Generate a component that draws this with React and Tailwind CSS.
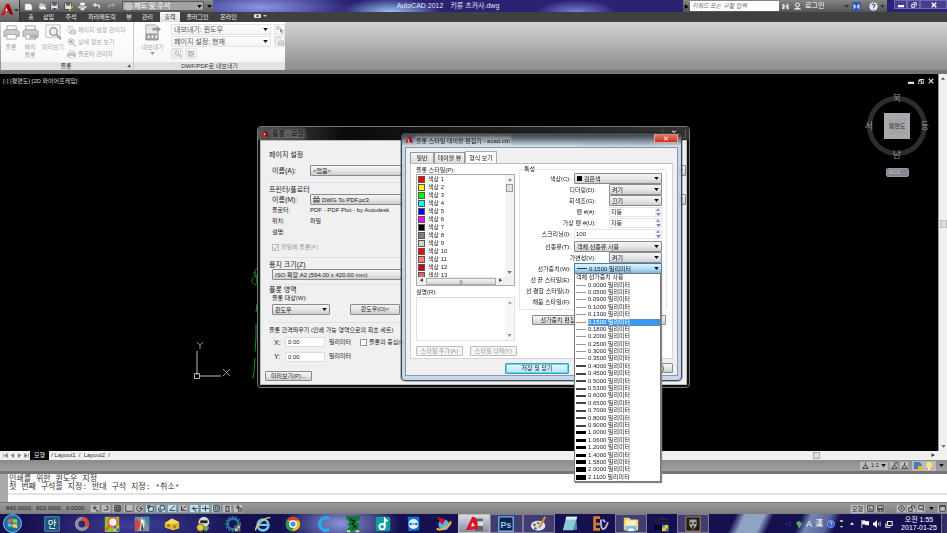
import React from "react";

const raised = "border border-[#8a8a8a] rounded-[1px] bg-linear-to-b from-[#f6f6f6] via-[#e6e6e6] to-[#cfcfcf]";

function Arrow({ className = "text-black" }) {
  return (
    <svg viewBox="0 0 6 4" className={`w-[5px] h-[3px] shrink-0 ${className}`} aria-hidden="true">
      <path d="M0 0h6L3 4z" fill="currentColor" />
    </svg>
  );
}

function ArrowUp({ className = "text-[#777]" }) {
  return (
    <svg viewBox="0 0 6 4" className={`w-[4px] h-[3px] shrink-0 ${className}`} aria-hidden="true">
      <path d="M0 4h6L3 0z" fill="currentColor" />
    </svg>
  );
}

function Select({ id, label, value, className = "", tone = raised, children }) {
  return (
    <div className={`flex items-center h-[11px] min-w-0 px-[2px] gap-[2px] ${tone} ${className}`}>
      {children}
      <select id={id} aria-label={label} defaultValue={value} className="appearance-none bg-transparent outline-none flex-1 min-w-0 h-[8px] leading-[8px] p-0">
        <option>{value}</option>
      </select>
      <Arrow />
    </div>
  );
}

function Logo({ className }) {
  return (
    <svg viewBox="0 0 18 18" className={className} aria-hidden="true">
      <path d="M1 16 8 1l4 1 5 13-5-1-1-3-4 1-2 4z" fill="#d8141c" />
      <path d="M8 1l4 1 5 13-5-1z" fill="#8d0a10" />
      <path d="m8 6 2 4-3 1z" fill="#fff" />
    </svg>
  );
}

/* ---------- application header ---------- */

const g = { fill: "none", stroke: "currentColor", strokeWidth: 1.2 };

function QuickIcon({ kind }) {
  return (
    <svg viewBox="0 0 12 12" className="w-[9px] h-[9px] text-[#eee]" aria-hidden="true">
      {kind === "new" && <path d="M1 2h7l3 3v6H1z" fill="#f4f4f4" stroke="#555" strokeWidth=".5" />}
      {kind === "open" && <><path d="M2 2h4l1 1h3v7H2z" fill="#cfd8e4" /><path d="M0 5h9l3 5H3z" fill="#f2f2f2" stroke="#444" strokeWidth=".5" /></>}
      {kind === "save" && <><path d="M1 1h10v10H1z" fill="#dfe6ee" stroke="#333" /><path d="M3 1h6v4H3zM3 8h6v3H3z" fill="#55606e" /></>}
      {kind === "saveas" && <><path d="M1 1h9v9H1z" fill="#dfe6ee" stroke="#333" /><path d="M3 1h5v4H3z" fill="#55606e" /><path d="m6 11 5-6 1 2-4 5z" fill="#e9b93b" /></>}
      {kind === "print" && <><path d="M3 1h6v4H3z" fill="#fff" /><path d="M0 5h12v4H0z" fill="#d4d4d4" stroke="#333" strokeWidth=".6" /><path d="M3 8h6v3H3z" fill="#fff" stroke="#444" strokeWidth=".5" /></>}
      {kind === "undo" && <path d="M5 1 1 4l4 3V5c4 0 5 1 4 5 4-5 1-7-4-7z" fill="#dbe6f2" />}
      {kind === "redo" && <path d="m7 1 4 3-4 3V5C3 5 2 6 3 10-1 5 2 3 7 3z" fill="#a3a3a3" />}
      {kind === "gear" && <><circle cx="6" cy="6" r="4.6" {...g} strokeDasharray="1.6 .8" /><circle cx="6" cy="6" r="3.6" {...g} strokeWidth=".8" /><circle cx="6" cy="6" r="1.4" {...g} /></>}
    </svg>
  );
}

function TitleRow() {
  return (
    <div className="flex h-[12px] text-[6px] leading-[8px] bg-[#2a2374] bg-[radial-gradient(ellipse_90px_18px_at_26%_60%,#8d96e6,transparent),radial-gradient(ellipse_50px_14px_at_40%_100%,#9bc4f2,transparent),radial-gradient(ellipse_40px_12px_at_60%_100%,#7b7fd6,transparent)]">
      <div className="flex items-center w-[193px] bg-linear-to-b from-[#8d8d8d] to-[#5c5c5c] pl-[4px] gap-[6px]">
        <button aria-label="새로 만들기"><QuickIcon kind="new" /></button>
        <button aria-label="열기" className="-ml-px"><QuickIcon kind="open" /></button>
        <button aria-label="저장" className="ml-[-3px]"><QuickIcon kind="save" /></button>
        <button aria-label="다른 이름으로 저장" className="-ml-px"><QuickIcon kind="saveas" /></button>
        <button aria-label="플롯" className="-ml-px"><QuickIcon kind="print" /></button>
        <button aria-label="명령 취소" className="-ml-px"><QuickIcon kind="undo" /></button>
        <button aria-label="명령 복구"><QuickIcon kind="redo" /></button>
        <div className="flex items-center h-[10px] flex-1 border border-[#5a5a5a] bg-[#a3a3a3] text-white px-px gap-px">
          <QuickIcon kind="gear" />
          <select aria-label="작업공간" defaultValue="제도 및 주석" className="appearance-none bg-transparent flex-1 min-w-0 text-[7px] leading-[8px]">
            <option>제도 및 주석</option>
          </select>
          <Arrow />
        </div>
        <span className="-ml-[3px] pr-px"><Arrow /></span>
      </div>
      <div className="flex flex-1 justify-center items-center text-[#e4e4f4] text-[7px] gap-[7px]">
        <span>AutoCAD 2012</span><span>키류 츠카사.dwg</span>
      </div>
      <div className="flex items-center w-[204px] bg-linear-to-b from-[#858585] to-[#555] text-white">
        <span className="w-[7px] text-black text-[5px] text-center">▶</span>
        <input aria-label="검색" placeholder="키워드 또는 구절 입력" className="w-[89px] h-[10px] bg-white px-[2px] italic placeholder:text-[#666] text-[6px]" />
        <svg viewBox="0 0 12 12" className="w-[9px] h-[9px] ml-[2px]" aria-hidden="true"><path d="M2 2h3v3h2V2h3l1 8H7V7H5v3H1z" fill="#e2e2e2" stroke="#333" strokeWidth=".4" /></svg>
        <svg viewBox="0 0 12 12" className="w-[9px] h-[9px] ml-[3px]" aria-hidden="true"><circle cx="6" cy="4" r="2.6" {...g} /><path d="M1 10c1-3 9-3 10 0z" fill="#eee" /></svg>
        <button className="ml-[3px] text-[7px]">로그인</button>
        <span className="flex-1" />
        <Arrow className="text-[#333]" />
        <svg viewBox="0 0 12 12" className="w-[9px] h-[9px] ml-[3px]" aria-hidden="true"><path d="M0 0h12v12H0z" fill="#2e56a8" /><path d="M2 2l4 4-4 4zm8 0L6 6l4 4z" fill="#bcd3f5" /></svg>
        <svg viewBox="0 0 12 12" className="w-[9px] h-[9px] ml-[8px]" aria-hidden="true"><circle cx="6" cy="6" r="5.5" fill="#eef3fb" /><path d="M4 4.600c0-2.600 4-2.400 4 0C8 6 6 6 6 7.600M6 9v1.200" fill="none" stroke="#1d4fae" strokeWidth="1.500" /></svg>
        <span className="mx-[2px]"><Arrow className="text-[#333]" /></span>
      </div>
      <div className="flex w-[60px] h-[9px] pl-[7px] text-white">
        {["최소화", "최대화", "닫기"].map((n, i) => (
          <button key={n} aria-label={n} className={`flex items-center justify-center border border-[#6d6ab0] bg-[#45408c] ${i === 2 ? "flex-1" : "w-[13px]"}`}>
            <svg viewBox="0 0 8 8" className="w-[6px] h-[6px]">
              {i === 0 && <path d="M0 4h8v3H0z" fill="#fff" />}
              {i === 1 && <path d="M3 1h4v4M1 3h4v4H1z" {...g} />}
              {i === 2 && <path d="m1 1 6 6M7 1 1 7" {...g} strokeWidth="2" />}
            </svg>
          </button>
        ))}
      </div>
    </div>
  );
}

function MenuRow() {
  const tab = "h-full leading-[9px]";
  return (
    <nav className="flex h-[10px] pl-[7px] bg-[#404040] text-[#eee] text-[6px]">
      <button className={`${tab} w-[8px]`}>홈</button>
      <button className={`${tab} w-[27px]`}>삽입</button>
      <button className={`${tab} w-[18px]`}>주석</button>
      <button className={`${tab} w-[44px]`}>파라메트릭</button>
      <button className={`${tab} w-[10px]`}>뷰</button>
      <button className={`${tab} w-[27px]`}>관리</button>
      <button className="w-[20px] mx-[-2px] leading-[9px] bg-linear-to-b from-[#f8f8f8] to-[#dedede] text-[#222] ml-[-1px]">출력</button>
      <button className={`${tab} w-[39px]`}>플러그인</button>
      <button className={`${tab} w-[23px]`}>온라인</button>
      <svg viewBox="0 0 14 8" className="w-[14px] h-[8px] ml-[14px]" aria-hidden="true"><rect x="0" y="2" width="7" height="4" rx="1" fill="#ddd" /><circle cx="3.500" cy="4" r="1.200" fill="#444" /><path d="M9 3h4l-2 2z" fill="#ccc" /></svg>
    </nav>
  );
}

function RibbonIcon({ kind, className }) {
  return (
    <svg viewBox="0 0 18 18" className={className} aria-hidden="true">
      {(kind === "printer" || kind === "batch") && <>
        <path d="M4 2h10v5H4z" fill="#fafafa" stroke="#a8a8a8" />
        <path d="M1 8l2-2h12l2 2v5H1z" fill="#ccc" stroke="#9c9c9c" />
        <path d="M4 11h10v5H4z" fill="#fdfdfd" stroke="#a8a8a8" />
        {kind === "batch" && <path d="M8 12h5v-2l5 3.500-5 3.500v-2H8z" fill="#aaa" />}
      </>}
      {kind === "preview" && <><path d="M1 1h15v13H1z" fill="#fdfdfd" stroke="#bbb" /><circle cx="9" cy="8" r="4" fill="#eee" stroke="#999" strokeWidth="1.500" /><path d="m12 11 5 5" stroke="#999" strokeWidth="2" /></>}
      {kind === "page" && <><path d="M2 1h10v12H2z" fill="#fff" stroke="#aaa" /><path d="M7 8h10v8H7z" fill="#ddd" stroke="#999" /><path d="M4 4h5" stroke="#999" /></>}
      {kind === "details" && <><circle cx="8" cy="7" r="5.500" fill="#f2f2f2" stroke="#aaa" strokeWidth="1.500" /><path d="M5 7h6M8 4v6m4 1 5 6" stroke="#999" strokeWidth="2" /></>}
      {kind === "export" && <>
        <path d="M2 1h10l3 3v13H2z" fill="#e8e8e8" stroke="#a8a8a8" />
        <path d="M9 4h5V2l4 3.500L14 9V7H9z" fill="#999" />
        <path d="M2 10h13v7H2z" fill="#9a9a9a" /><path d="M4 12h2v3H4zm4 0h2v3H8zm4 0h2v3h-2z" fill="#f4f4f4" />
      </>}
      {kind === "pick" && <><path d="M2 3h9v2H2zm0 4h7v2H2z" fill="#aaa" /><path d="m10 6 7 6-3 .5 2 3.500-2 1-2-3.500-2 2z" fill="#999" /></>}
      {kind === "options" && <><path d="M3 4h12v11H3z" fill="#ddd" stroke="#aaa" /><circle cx="9" cy="9.500" r="3" fill="#fff" stroke="#888" strokeWidth="1.500" /><path d="M1 2l4 3M17 2l-4 3" stroke="#aaa" /></>}
    </svg>
  );
}

function RibbonSmall({ kind, children }) {
  return (
    <button className="flex items-center gap-[2px] h-[12px] whitespace-nowrap">
      <RibbonIcon kind={kind} className="w-[9px] h-[9px] shrink-0" />{children}
    </button>
  );
}

function Ribbon() {
  const title = "flex items-center justify-center h-[8px] bg-[#e3e3e3] text-[#333] leading-[8px]";
  const sel = "border border-[#e4e4e4] bg-linear-to-b from-white to-[#f1f1f1]";
  return (
    <div className="flex h-[52px] bg-linear-to-b from-[#d4d4d4] to-[#8e8e8e] border-b-4 border-[#777] text-[6px] leading-[8px] text-[#a6a6a6]">
      <section className="flex flex-col w-[133px] ml-px bg-linear-to-b from-white to-[#f6f6f6] border-r border-[#ccc]">
        <div className="flex flex-1 pt-[2px]">
          <button className="flex flex-col items-center w-[20px]"><RibbonIcon kind="printer" className="w-[17px] h-[17px] mb-[2px]" />플롯</button>
          <button className="flex flex-col items-center w-[18px]"><RibbonIcon kind="batch" className="w-[17px] h-[17px] mb-[2px]" />배치<br />플롯</button>
          <button className="flex flex-col items-center w-[28px]"><RibbonIcon kind="preview" className="w-[17px] h-[17px] mb-[2px]" />미리보기</button>
          <div className="flex flex-col">
            <RibbonSmall kind="page">페이지 설정 관리자</RibbonSmall>
            <RibbonSmall kind="details">상세 정보 보기</RibbonSmall>
            <RibbonSmall kind="printer">플로터 관리자</RibbonSmall>
          </div>
        </div>
        <h2 className={title}><span className="flex-1 text-center pl-[4px]">플롯</span><Arrow className="text-[#555] mr-px -rotate-45" /></h2>
      </section>
      <section className="flex flex-col w-[151px] bg-linear-to-b from-white to-[#f6f6f6]">
        <div className="flex flex-1 pt-[2px]">
          <button className="flex flex-col items-center w-[37px]"><RibbonIcon kind="export" className="w-[17px] h-[17px] mb-[2px]" />내보내기<Arrow className="text-[#999] mt-px" /></button>
          <div className="flex flex-col flex-1 gap-px text-[#555]">
            <div className="flex gap-[3px]">
              <Select label="내보내기" value="내보내기: 윈도우" tone={sel} className="flex-1 text-[7px]" />
              <button aria-label="선택" className={`w-[11px] ${sel}`}><RibbonIcon kind="pick" className="w-[9px] h-[9px]" /></button>
            </div>
            <div className="flex gap-[3px]">
              <Select label="페이지 설정" value="페이지 설정: 현재" tone={sel} className="flex-1 text-[7px]" />
              <button aria-label="페이지" className={`w-[11px] ${sel}`}><RibbonIcon kind="page" className="w-[9px] h-[9px]" /></button>
            </div>
            <div className="flex gap-[2px]">
              <button aria-label="미리보기" className={`w-[12px] h-[11px] ${sel}`}><RibbonIcon kind="preview" className="w-[10px] h-[9px]" /></button>
              <button aria-label="옵션" className={`w-[12px] h-[11px] ${sel}`}><RibbonIcon kind="options" className="w-[10px] h-[9px]" /></button>
            </div>
          </div>
        </div>
        <h2 className={title}>DWF/PDF로 내보내기</h2>
      </section>
    </div>
  );
}

/* ---------- drawing area ---------- */

function DrawingArea() {
  return (
    <div className="relative flex flex-1 min-h-0 bg-black">
      <div className="flex-1 flex flex-col">
        <div className="flex justify-between text-[#ddd] text-[6px] leading-[8px] pl-[3px] pt-[3px]">
          <span>[-] [평면도] [2D 와이어프레임]</span>
          <div className="flex gap-[4px] pr-[4px]">
            {["M0 5h8v3H0z", "M2 2h6v5H6M0 4h5v4H0zM2 2v2", "m1 1 6 6M7 1 1 7"].map((d, i) => (
              <svg key={d} viewBox="0 0 8 8" className="w-[6px] h-[6px] mt-px"><path d={d} fill={i === 0 ? "#ddd" : "none"} stroke="#ddd" strokeWidth={i === 0 ? 0 : 1.5} /></svg>
            ))}
          </div>
        </div>
        <div className="self-end flex flex-col items-center mr-[7px] mt-[7px] gap-[8px]">
          <svg viewBox="0 0 68 68" className="w-[68px] h-[68px]" fontSize="9" textAnchor="middle" fill="#8d8d8d">
            <circle cx="34" cy="34" r="27.500" fill="none" stroke="#2d2d2d" strokeWidth="5" />
            <rect x="21" y="21" width="26" height="26" fill="#a9a9a9" />
            <rect x="26" y="26" width="16" height="16" fill="#a0a3a8" />
            <text x="34" y="9">북</text><text x="34" y="66">남</text>
            <text x="6" y="37">서</text><text x="62" y="37">동</text>
            <text x="34" y="36" fontSize="6" fill="#333">평면도</text>
          </svg>
          <button className="w-[23px] h-[9px] rounded-[2px] bg-[#85858f] border border-[#9a9aa2] text-[#ccc] text-[5px] leading-[7px] text-left pl-[2px]">WCS</button>
        </div>
      </div>
      <svg viewBox="0 0 90 120" className="absolute left-[180px] bottom-[65px] w-[90px] h-[120px]" fill="none" aria-hidden="true">
        <path d="M17 109V85M20 110h21" stroke="#bbb" />
        <path d="M14.500 107.500h5v5h-5z" stroke="#bbb" />
        <path d="m17 76 3 3.500 3-3.500m-3 3.500V83M43 103l7 7m0-7-7 7" stroke="#999" />
        <path d="M79 2c-3 0-4 2-4 4s2 3 4 4c-6 0-7 3-7 5s2 4 6 4m-4-13c0 4 3 4 3 7s-1 3 0 4M77 38l-1 8m0 12v14l-1 14m0 6-1 13-1 8" stroke="#11921b" />
      </svg>
      <div className="flex flex-col items-center w-[9px] bg-[#f0f0f0] border-l border-[#999] pt-[3px]">
        <ArrowUp className="text-[#555]" />
        <div className="w-[7px] h-[8px] mt-[140px] border border-[#bbb] bg-[#ddd]" />
        <span className="flex-1" /><Arrow className="text-[#777] mb-[3px]" />
      </div>
    </div>
  );
}

function LayoutTabs() {
  return (
    <div className="flex items-center h-[9px] bg-[#f0f0f0] text-[6px] leading-[9px] text-[#333]">
      <div className="flex gap-[2px] pl-[3px] w-[30px]">
        {["M1 1v6M7 1 3 4l4 3z", "M6 1 2 4l4 3z", "m2 1 4 3-4 3z", "M7 1v6M1 1l4 3-4 3z"].map((d) => (
          <svg key={d} viewBox="0 0 8 8" className="w-[5px] h-[5px]"><path d={d} fill="#777" stroke="#777" /></svg>
        ))}
      </div>
      <button className="bg-black text-white w-[19px] h-full">모형</button>
      <button className="pl-[2px] pr-[3px] whitespace-pre">/ Layout1</button>
      <button className="whitespace-pre">/  Layout2  /</button>
      <span className="flex-1" />
      <div className="w-[7px] h-[7px] border border-[#aaa] bg-[#ddd] mr-[111px]" />
      <span className="text-[4px] w-[16px]">▶</span>
    </div>
  );
}

function SmallGlyph({ d, on }) {
  return (
    <button aria-label="상태 전환" className={`flex items-center justify-center w-[10px] h-[9px] border ${on ? "bg-[#c3dfee] border-[#7fa3b5]" : "bg-[#bdbdbd] border-[#999]"}`}>
      <svg viewBox="0 0 10 10" className="w-[7px] h-[7px]"><path d={d} fill="none" stroke="#333" strokeWidth="1.300" /></svg>
    </button>
  );
}

const toggles = [
  ["M1 4h6M4 1v6m1-1 4 4M7 9l2-2", false], ["M1 7h6V2H4", false], ["M1 1h8v8H1zM1 4h8M1 7h8M4 1v8M7 1v8", false],
  ["M1 0v9h9", false], ["M5 1a4 4 0 1 0 4 4H5l4-4", false], ["M2 2h7v7H2zM0 0h4v4H0z", true], ["M3 1h6v6H3zM1 4v5h5", true],
  ["M8 1 1 8h8", true], ["M2 1v7h7M3 7l6-6", false], ["M1 5h8M4 2v5l4 2", true], ["M0 5h10M5 1v8", true],
  ["M1 1h8v8H1zM3 3h4v4H3z", true], ["M2 2h6M3 2v7M7 2v7M2 9h6", false], ["M1 3h6M4 0v6M5 5h4v4H5z", false],
];

function AnnotationBar() {
  return (
    <div className="flex items-center justify-end h-[14px] bg-linear-to-b from-[#8b8b8b] to-[#a2a2a2] border-b-[3px] border-[#777] text-[6px] leading-[9px] text-[#222]">
      <div className="flex items-center gap-[2px] bg-[#bbb] border border-[#999] h-[10px] px-[2px]">
        <svg viewBox="0 0 10 10" className="w-[7px] h-[7px]"><path d="M5 1v3L1 9h8L5 4" {...g} /></svg>1:1<Arrow />
      </div>
      <SmallGlyph d="M5 1v3L1 9h8L5 4M6 1h4v4" />
      <SmallGlyph d="M5 1v3L1 9h8L5 4" />
      <svg viewBox="0 0 24 10" className="w-[24px] h-[10px] ml-[3px]" aria-hidden="true">
        <path d="M0 0h24v10H0z" fill="#bbb" /><path d="M2 1h6l2 3v4H2z" fill="#4879b9" /><path d="M6 5h5v4H6z" fill="#e8b92d" />
        <circle cx="17" cy="4" r="3" fill="#ffe37a" /><path d="M16 7h2v2h-2z" fill="#eee" />
      </svg>
      <span className="px-[3px]"><Arrow /></span>
    </div>
  );
}

function CommandLine() {
  return (
    <div className="flex h-[29px] bg-white border-b border-[#777]">
      <div className="w-[8px] bg-[#a9a9a9]" />
      <div className="flex-1 flex flex-col pt-px font-['Liberation_Mono','Noto_Sans_CJK_KR',monospace] text-[8px] leading-[8px] text-[#333]">
        <p className="pl-px whitespace-pre">인쇄를 위한 윈도우 지정</p>
        <p className="pl-px whitespace-pre">첫 번째 구석을 지정: 반대 구석 지정: *취소*</p>
        <input aria-label="명령" className="w-full mt-[2px] h-[9px] border-t-2 border-[#e3e3e3] outline-none" />
      </div>
    </div>
  );
}

function StatusBar() {
  return (
    <div className="flex items-center h-[11px] bg-linear-to-b from-[#9b9b9b] to-[#7e7e7e] text-[6px] leading-[9px] text-[#222]">
      <span className="pl-[6px] w-[90px] whitespace-pre">840.0000,  820.0000 , 0.0000</span>
      <div className="flex gap-[1px]">
        {toggles.map(([d, on]) => <SmallGlyph key={d} d={d} on={on} />)}
      </div>
      <span className="flex-1" />
      <button className="bg-[#bbb] border border-[#999] h-[10px] px-px leading-[8px]">모형</button>
      <SmallGlyph d="M1 1h8v8H1zM4 3v4h4" /><SmallGlyph d="M1 1h8v4H1zM1 6h3v3H1zM6 6h3v3H6z" />
      <span className="w-[11px]" />
      <SmallGlyph d="M5 1a4 4 0 1 0 .1 0M5 4a1 1 0 1 0 .1 0" /><SmallGlyph d="M1 4h5v5H1zM5 4V1h4v4" /><SmallGlyph d="M1 1h7v5H1zM5 5l4 4" />
      <span className="px-[3px]"><Arrow /></span>
      <SmallGlyph d="M1 1h8v8H1zM1 2h8" />
    </div>
  );
}

/* ---------- taskbar ---------- */

const apps = [
  ["한글 입력기", <><path d="M2 2h16v16H2z" fill="#175676" stroke="#5f9cb6" /><text x="10" y="14" fontSize="11" fill="#fff" textAnchor="middle">안</text></>],
  ["디스크", <><circle cx="10" cy="10" r="6" fill="none" stroke="#8d90a0" strokeWidth="4" /><path d="M10 4a6 6 0 0 1 5 9" fill="none" stroke="#e8442c" strokeWidth="4" /></>],
  ["검색", <><path d="M2 2h16v17H2z" fill="#8fc22e" /><circle cx="11" cy="8" r="5" fill="#fff" stroke="#e8632a" strokeWidth="2" /><path d="m7 12-4 5" stroke="#e8632a" strokeWidth="2.500" /><path d="M12 12h6v6h-6z" fill="#f1c437" /><path d="M12 12h3v3h-3zm3 3h3v3h-3z" fill="#2b71c8" /></>],
  ["게임", <><path d="M2 2h16v16H2z" fill="#78939c" /><path d="M3 3l6 7-5 8H2z" fill="#d84335" /><path d="M12 2h6v12z" fill="#3b8ba8" /><path d="M9 4l4 3-1 10H8z" fill="#f1ece2" /><path d="M10 8l2 9H9z" fill="#333" /></>],
  ["치즈", <><path d="M2 9 10 4l8 4v7l-7 2-9-3z" fill="#dfb62c" /><path d="M2 9 10 4l8 4-7 2z" fill="#f4dc6a" /><circle cx="6" cy="12" r="1.500" fill="#94701a" /><circle cx="13" cy="13" r="1.500" fill="#94701a" /></>],
  ["도구", <><circle cx="11" cy="8" r="6" fill="#d6d8d0" /><path d="M7 6h8v3H7z" fill="#222" /><circle cx="7" cy="14" r="4" fill="#f1c928" stroke="#555" /><path d="M12 12l5 2-3 4-4-2z" fill="#6aae42" /></>],
  ["설정", <><circle cx="10" cy="10" r="6" fill="none" stroke="#26739e" strokeWidth="3" /><circle cx="10" cy="10" r="8" fill="none" stroke="#26739e" strokeWidth="2" strokeDasharray="2 2" /><path d="M12 12h6v6h-6z" fill="#f1c437" /><path d="M12 12h3v3h-3zm3 3h3v3h-3z" fill="#2b71c8" /></>],
  ["인터넷 익스플로러", <><circle cx="10" cy="11" r="6" fill="none" stroke="#6ec6f3" strokeWidth="3" /><path d="M5 11h11" stroke="#6ec6f3" strokeWidth="2.500" /><path d="M2 17C1 13 12 2 18 3" fill="none" stroke="#f3ce45" strokeWidth="1.600" /></>],
  ["크롬", <><circle cx="10" cy="10" r="8" fill="#e5c02c" /><path d="M3 6a8 8 0 0 1 14 0h-7z" fill="#d93d30" /><path d="M3 6a8 8 0 0 0 6 12l3-7z" fill="#279b4d" /><circle cx="10" cy="10" r="3.600" fill="#4d8fec" stroke="#fff" strokeWidth="1.400" /></>],
  ["C", <path d="M17 4a7 7 0 1 0 0 12" fill="none" stroke="#2aa9ea" strokeWidth="4" />],
  ["용", <><path d="M2 1h16l-1 5-4 1 4 4-1 4 2 4h-4l-2-3-3 3-3-1-4 2 2-5 3-2-3-2 2-4-3-2z" fill="#0c7a31" /><path d="m7 5 5 2-3 3 4 3-3 2" fill="none" stroke="#052a12" strokeWidth="1.500" /><path d="M3 18h4m6 0h4" stroke="#dfe57e" strokeWidth="2" /></>],
  ["음악", <><rect x="2" y="2" width="16" height="16" rx="2" fill="#119ba3" /><circle cx="9" cy="13" r="3" fill="none" stroke="#fff" strokeWidth="2" /><path d="M12 13V4l3 3" fill="none" stroke="#fff" strokeWidth="2" /></>],
  ["원격", <><path d="M4 2h13v15l-12 1z" fill="#1673d1" /><circle cx="10.500" cy="10" r="5.500" fill="#e7f2fb" /><path d="M5 10l3-2v4zm11 0-3-2v4zM8 9.400h5v1.200H8z" fill="#1673d1" /></>],
  ["행성", <><circle cx="11" cy="11" r="6" fill="#58b5e0" /><path d="M3 2l10 3-4 6z" fill="#c3142f" /><path d="M3 15c4 4 17-4 15-8" fill="none" stroke="#f0b13b" strokeWidth="2.400" /></>],
  ["AutoCAD", <><path d="M11 4h9v14h-9z" fill="#666" /><path d="M1 17 8 2l4 1 3 12-6 1z" fill="#d8141c" /><path d="m8 8 3 4-4 1z" fill="#fff" /><path d="M14 7h6v5h-6z" fill="#ddd" /></>, "on"],
  ["포토샵", <><path d="M2 2h16v16H2z" fill="#0c2350" stroke="#6fb1ea" strokeWidth="1.500" /><text x="10" y="14" fontSize="10" fontWeight="bold" fill="#8fc8f4" textAnchor="middle">Ps</text></>, "open"],
  ["그림판", <><ellipse cx="9" cy="12" rx="8" ry="5.500" fill="#d4e4f0" /><circle cx="5" cy="11" r="1.500" fill="#d33" /><circle cx="9" cy="9" r="1.500" fill="#3a3" /><circle cx="6" cy="15" r="1.500" fill="#36c" /><path d="m10 14 7-12" stroke="#dc8c3a" strokeWidth="2.500" /></>, "open"],
  ["메모장", <><path d="M6 2h12l-4 15H2z" fill="#8bcbd9" /><path d="M6 2h12l-1 3H5z" fill="#d8eef2" /><path d="M13 17l4-12 1 11z" fill="#4e92a5" /></>],
  ["편집기", <><path d="M10 3H4v13h6M4 10h6" stroke="#d47b2a" strokeWidth="3" fill="none" /><path d="M11 5c0 9 1 12 4 10s2-4 4-7M13 5l3 3" stroke="#b9c3cf" strokeWidth="2" fill="none" /></>],
  ["탐색기", <><path d="M2 3h6l2 2h8v12H2z" fill="#edce6f" /><path d="M4 6h12v9H4z" fill="#f9eeb8" /><path d="M4 12h12v6H4z" fill="#7bc0de" /><path d="M7 15h6v3H7z" fill="#eef6fa" /></>, "open"],
  ["WinMD5", <><text x="9" y="9" fontSize="9" fontWeight="bold" fill="#000" stroke="#46468a" strokeWidth=".3" textAnchor="middle">Win</text><path d="M2 11h2v5H2zm3 0h2v5H5zm3 0h2v5H8z" fill="#000" /><path d="M10 11h7v7h-7z" fill="#f1c437" /><path d="M10 11h3v3h-3zm4 4h3v3h-3z" fill="#3b83d8" /></>],
  ["게임 실행", <><path d="M2 2h16v16H2z" fill="#231b18" stroke="#8a7458" strokeWidth="1.500" /><path d="M6 5h8v7l-4 5-4-5z" fill="#aaa29a" /><path d="M7 8h2v2H7zm4 0h2v2h-2zM9 12h2v4H9z" fill="#2d2524" /></>, "open"],
];

function Taskbar() {
  return (
    <footer className="flex h-[19px] overflow-hidden bg-[#15104f] bg-[radial-gradient(ellipse_60px_26px_at_36%_50%,#8994d8,transparent),radial-gradient(ellipse_110px_24px_at_14%_60%,#3f3f98,transparent),linear-gradient(115deg,transparent_77%,#8fa3c4_78%,#8fa3c4_80%,transparent_81%,transparent_84%,#7487b2_85%,#56669b_87%,transparent_88%)]">
      <button aria-label="시작" className="w-[37px] pl-[3px]">
        <svg viewBox="0 0 20 20" className="w-[19px] h-[19px]"><circle cx="10" cy="10" r="9.500" fill="#1d6ba5" stroke="#8abfe0" /><path d="m5 6 4-1v4H5z" fill="#ec6a35" /><path d="m10 5 5 1v4l-5-1z" fill="#94c93f" /><path d="M5 10h4v4l-4-1z" fill="#62bdf0" /><path d="m10 10 5 1v4l-5-1z" fill="#f8cf43" /></svg>
      </button>
      <div className="flex w-[672px]">
        {apps.map(([name, art, state]) => (
          <button key={name} aria-label={name} className={`flex flex-1 items-center justify-center ${state === "on" ? "bg-linear-to-b from-[#dcdce6] to-[#8a8aa6] border border-[#bbb]" : state === "open" ? "bg-[#ffffff30] border border-[#ffffff50]" : ""}`}>
            <svg viewBox="0 0 20 20" className="w-[18px] h-[18px] shrink-0">{art}</svg>
          </button>
        ))}
      </div>
      <div className="flex flex-1 items-center justify-end gap-[4px] text-white text-[6px] leading-[8px]">
        <span className="text-[#8899bb]">◁</span>
        <svg viewBox="0 0 10 10" className="w-[8px] h-[8px]"><path d="M1 4l4-3 4 4-3 4z" fill="#58b65a" /><path d="M5 1l4 4-3 1z" fill="#4a90e0" /><path d="M3 6l3 3-1 1z" fill="#eebf3a" /></svg>
        <span className="text-[9px] -mx-px">A</span><span className="text-[8px]">漢</span>
        <svg viewBox="0 0 10 10" className="w-[8px] h-[8px]"><circle cx="5" cy="5" r="4.500" fill="#2a55cf" stroke="#dce6ff" strokeWidth=".6" /><path d="M3.500 4c0-2 3-2 3 0C6.500 5 5 5 5 6.200M5 7.200v1" fill="none" stroke="#fff" /></svg>
        <svg viewBox="0 0 6 10" className="w-[5px] h-[9px] mr-[2px]"><path d="M1 1h4v2H1zM1 8h4L3 10z" fill="#ddd" /></svg>
        <ArrowUp className="text-white mr-[3px]" />
        <svg viewBox="0 0 10 10" className="w-[8px] h-[8px]"><path d="M1 0v10M2 1h3l1 1h4v4H6L5 5H2z" fill="#fff" stroke="#fff" /></svg>
        <svg viewBox="0 0 10 10" className="w-[8px] h-[8px]"><path d="M0 3h2l3-3v10L2 7H0z" fill="#fff" /><path d="M7 3v4M9 2v6" stroke="#ddd" /></svg>
        <svg viewBox="0 0 10 10" className="w-[8px] h-[8px] mr-[4px]"><path d="M3 2h6v5H3zM1 4v5h6" fill="none" stroke="#eee" strokeWidth="1.300" /></svg>
        <time className="w-[36px] text-center text-[7px] leading-[8px] whitespace-nowrap">오전 1:55<br />2017-01-25</time>
        <span className="w-[6px] h-full border-l border-[#777] bg-[#ffffff20]" />
      </div>
    </footer>
  );
}

/* ---------- plot dialog ---------- */

function Group({ title, className, children }) {
  return (
    <fieldset className={`border-b border-[#dde3ea] ${className}`}>
      <legend className="float-left w-full h-[9px] leading-[9px] text-[7px]">{title}</legend>
      {children}
    </fieldset>
  );
}

function PlotDialog() {
  const row = "flex items-center h-[11px] pl-[3px] clear-both";
  const cap = "w-[38px] shrink-0";
  const box = "w-[40px] h-[10px] border border-[#dcdcdc] bg-white px-[2px] outline-none";
  return (
    <section role="dialog" aria-label="플롯 - 모형" className="absolute left-[257px] top-[126px] w-[433px] h-[262px] flex flex-col rounded-[4px] border border-[#777] bg-[#111] px-[2px] pb-[2px]">
      <header className="flex items-center h-[13px] gap-[3px] text-[7px] leading-[10px] bg-linear-to-r from-[#555] via-[#0b0b0b] to-[#333] via-20% -mx-[2px] px-[3px] rounded-t-[3px]">
        <Logo className="w-[8px] h-[8px]" /><h1 className="bg-[#606060] shadow-[0_0_3px_1px_#606060] text-[#111] leading-[8px]">플롯 - 모형</h1>
        <span className="flex-1" />
        <button aria-label="닫기" className="w-[24px] h-[9px] border border-t-0 border-[#555] text-white text-[7px] leading-[8px]">✕</button>
      </header>
      <div className="flex-1 flex flex-col bg-[#f0f0f0] border border-[#bbb] pl-[8px] pt-px text-[6px] leading-[9px] text-[#222]">
        <a href="#plotting" className="self-end mr-[26px] h-[8px] leading-[8px] text-[8px] text-[#5b4fd0] underline font-bold">플로팅에 대해 알아보기</a>
        <Group title="페이지 설정" className="h-[33px] mb-[2px]">
          <div className="flex items-center pl-[3px] pt-[6px] clear-both">
            <label htmlFor="setup" className={`${cap} text-[7px]`}>이름(A):</label><Select id="setup" value="<없음>" className="flex-1" />
          </div>
        </Group>
        <Group title="프린터/플로터" className="h-[73px] mb-[2px]">
          <div className={row}>
            <label htmlFor="plotter" className={`${cap} text-[7px]`}>이름(M):</label>
            <Select id="plotter" value="DWG To PDF.pc3" className="flex-1">
              <svg viewBox="0 0 8 8" className="w-[7px] h-[7px]"><path d="M2 0h4v3H2zM0 3h8v3H0zM2 5h4v3H2z" fill="#eee" stroke="#333" strokeWidth=".8" /></svg>
            </Select>
          </div>
          <div className={row}><span className={cap}>플로터:</span>PDF - PDF Plot - by Autodesk</div>
          <div className={row}><span className={cap}>위치:</span>파일</div>
          <div className={row}><span className={cap}>설명:</span></div>
          <label className="flex items-center gap-[2px] pl-[3px] mt-[4px] h-[11px] text-[#999]">
            <span className="grid">
              <input type="checkbox" defaultChecked disabled className="appearance-none col-start-1 row-start-1 w-[7px] h-[7px] border border-[#bbb] bg-[#f6f6f6]" />
              <svg viewBox="0 0 7 7" className="col-start-1 row-start-1 w-[7px] h-[7px]"><path d="m1.500 3.500 1.500 2 2.500-4" fill="none" stroke="#aaa" /></svg>
            </span>파일에 플롯(F)
          </label>
        </Group>
        <Group title="용지 크기(Z)" className="h-[25px]">
          <div className="pl-[3px] clear-both"><Select label="용지 크기(Z)" value="ISO 확장 A2 (594.00 x 420.00 mm)" className="w-[200px]" /></div>
        </Group>
        <Group title="플롯 영역" className="h-[38px] mb-[3px]">
          <div className="pl-[3px] clear-both"><label htmlFor="what" className="block h-[10px]">플롯 대상(W):</label></div>
          <div className="flex pl-[3px] gap-[20px]">
            <Select id="what" value="윈도우" className="w-[58px]" />
            <button className={`w-[50px] h-[11px] leading-[9px] ${raised}`}>윈도우(O)&lt;</button>
          </div>
        </Group>
        <fieldset className="flex flex-col">
          <legend className="h-[10px] leading-[9px]">플롯 간격띄우기 (인쇄 가능 영역으로의 최초 세트)</legend>
          <div className="flex items-center h-[12px] pl-[5px]">
            <label htmlFor="ox" className="w-[11px] text-[7px]">X:</label><input id="ox" defaultValue="0.00" className={box} /><span className="pl-[4px] w-[35px]">밀리미터</span>
            <label className="flex items-center gap-[2px]"><input type="checkbox" className="appearance-none w-[7px] h-[7px] border border-[#999] bg-white" />플롯의 중심(C)</label>
          </div>
          <div className="flex items-center h-[14px] pt-[3px] pl-[5px]">
            <label htmlFor="oy" className="w-[11px] text-[7px]">Y:</label><input id="oy" defaultValue="0.00" className={box} /><span className="pl-[4px]">밀리미터</span>
          </div>
        </fieldset>
        <button className={`w-[47px] h-[10px] leading-[8px] mt-auto mb-[3px] -ml-[4px] text-[6px] shrink-0 ${raised}`}>미리보기(P)...</button>
      </div>
    </section>
  );
}

/* ---------- plot style table editor ---------- */

const swatches = ["bg-[#ff0000]", "bg-[#ffff00]", "bg-[#00ff00]", "bg-[#00ffff]", "bg-[#0000ff]", "bg-[#ff00ff]", "bg-black", "bg-[#808080]", "bg-[#d3d3d3]", "bg-[#ff0000]", "bg-[#ff7f7f]", "bg-[#d40000]", "bg-[#dc6a6a]"];

const weights = ["0.0000", "0.0500", "0.0900", "0.1000", "0.1300", "0.1500", "0.1800", "0.2000", "0.2500", "0.3000", "0.3500", "0.4000", "0.4500", "0.5000", "0.5300", "0.6000", "0.6500", "0.7000", "0.8000", "0.9000", "1.0000", "1.0600", "1.2000", "1.4000", "1.5800", "2.0000", "2.1100"];

function strokeFor(w) {
  const v = Number(w);
  if (v >= 2) return "h-[5px] bg-black";
  if (v >= 1.5) return "h-[4px] bg-black";
  if (v >= 1) return "h-[3px] bg-black";
  if (v >= 0.4) return "h-[2px] bg-[#444]";
  return "h-px bg-[#999]";
}

function Prop({ label, id, narrow, children }) {
  return (
    <div className="flex items-center h-[11px]">
      <label htmlFor={id} className={`shrink-0 text-right whitespace-nowrap ${narrow ? "w-[76px] mr-[13px]" : "w-[51px] mr-[3px]"}`}>{label}</label>
      {children}
    </div>
  );
}

function Spin({ id, value }) {
  return (
    <div className="flex flex-1 min-w-0 h-[10px] border border-[#e4e4e4] bg-white">
      <input id={id} defaultValue={value} className="flex-1 min-w-0 px-px outline-none bg-transparent leading-[8px]" />
      <span className="flex flex-col justify-center gap-[2px] w-[6px] items-center bg-[#f2f2f2]"><ArrowUp className="text-[#7487b5]" /><Arrow className="text-[#7487b5]" /></span>
    </div>
  );
}

function StyleEditor() {
  const tab = "h-[11px] border border-b-0 border-[#999] bg-linear-to-b from-[#f6f6f6] to-[#ddd] leading-[9px]";
  const off = "h-[10px] leading-[8px] border border-[#bbb] bg-[#f4f4f4] text-[#999] rounded-[1px]";
  return (
    <section role="dialog" aria-label="플롯 스타일 테이블 편집기" className="absolute left-[401px] top-[133px] w-[281px] h-[248px] flex flex-col rounded-[4px] border border-[#3d4650] ring-1 ring-[#00000040] bg-[#b9d1eacc] backdrop-blur-[2px] px-[3px] pb-[4px] text-[6px] leading-[8px] text-[#222]">
      <header className="flex h-[13px] gap-[3px] text-[7px] bg-linear-to-b from-[#00000090] to-[#ffffff60] -mx-[3px] pl-[3px] rounded-t-[3px]">
        <Logo className="w-[8px] h-[8px] mt-[2px]" />
        <h1 className="mt-[3px] h-[8px] text-[6px] bg-[#ffffff40] shadow-[0_0_3px_1px_#ffffff40]">플롯 스타일 테이블 편집기 - acad.ctb</h1>
        <span className="flex-1" />
        <button aria-label="닫기" className="w-[24px] h-[9px] mr-[3px] border border-t-0 border-[#eea598] rounded-b-[2px] bg-linear-to-b from-[#e3816f] to-[#c0301c] text-white leading-[7px]">✕</button>
      </header>
      <div className="flex-1 flex flex-col bg-[#f0f0f0] border border-[#8a97a8] px-[4px] pt-[3px]">
        <div role="tablist" className="flex items-end h-[12px]">
          <button role="tab" className={`w-[24px] ${tab}`}>일반</button>
          <button role="tab" className={`w-[31px] ${tab}`}>테이블 뷰</button>
          <button role="tab" aria-selected="true" className="w-[32px] h-[12px] border border-b-0 border-[#aaa] bg-white leading-[10px]">형식 보기</button>
        </div>
        <div className="flex bg-white border border-[#d4d4d4] border-t-[#bbb] h-[196px] pl-[5px] pr-[5px] pt-[2px]">
          <div className="w-[99px] shrink-0 flex flex-col">
            <h2 className="h-[8px]">플롯 스타일(P):</h2>
            <div className="h-[112px] flex flex-col border border-[#aaa]">
              <div className="flex flex-1 min-h-0 overflow-hidden">
                <ul className="flex-1">
                  {swatches.map((c, i) => (
                    <li key={i} className="flex items-center h-[8px] pl-px gap-[3px]">
                      <span className={`w-[7px] h-[7px] border border-[#555] ${c}`} />색상 {i + 1}
                    </li>
                  ))}
                </ul>
                <div className="flex flex-col items-center w-[9px] bg-[#f2f2f2] pt-[3px]">
                  <ArrowUp /><div className="w-[7px] h-[8px] mt-[3px] border border-[#999] bg-[#e2e2e2]" />
                  <span className="flex-1" /><Arrow className="text-[#777] mb-[3px]" />
                </div>
              </div>
              <div className="flex items-center h-[8px] bg-[#f0f0f0] text-[4px] text-[#444]">
                <span className="w-[9px] text-center">◀</span>
                <div className="w-[70px] h-[7px] border border-[#aaa] bg-linear-to-b from-[#f4f4f4] to-[#d6d6d6] text-center leading-[5px]">|||</div>
                <span className="w-[9px] text-center">▶</span>
              </div>
            </div>
            <label htmlFor="desc" className="mt-[2px] h-[9px]">설명(R):</label>
            <div className="flex h-[44px] border border-[#e0e0e0]">
              <textarea id="desc" className="flex-1 min-w-0 resize-none outline-none" />
              <div className="flex flex-col justify-between items-center w-[9px] bg-[#f7f7f7] py-[3px]"><ArrowUp className="text-[#999]" /><Arrow className="text-[#999]" /></div>
            </div>
            <div className="flex gap-[7px] mt-[5px]">
              <button className={`w-[47px] whitespace-nowrap shrink-0 ${off}`}>스타일 추가(A)</button>
              <button className={`w-[47px] whitespace-nowrap shrink-0 ${off}`}>스타일 삭제(Y)</button>
            </div>
          </div>
          <div className="flex-1 min-w-0 ml-[4px] flex flex-col">
            <fieldset className="min-w-0 h-[144px] border border-[#e1e5ea] rounded-[2px] pr-[4px]">
              <legend className="ml-[3px] px-px h-[7px] leading-[7px]">특성</legend>
              <Prop label="색상(C):" id="color"><Select id="color" value="검은색" className="flex-1"><span className="w-[5px] h-[5px] bg-black" /></Select></Prop>
              <Prop label="디더링(D):" id="dither" narrow><Select id="dither" value="켜기" className="flex-1" /></Prop>
              <Prop label="회색조(G):" id="gray" narrow><Select id="gray" value="끄기" className="flex-1" /></Prop>
              <Prop label="펜 #(#):" id="pen" narrow><Spin id="pen" value="자동" /></Prop>
              <Prop label="가상 펜 #(U):" id="vpen" narrow><Spin id="vpen" value="자동" /></Prop>
              <Prop label="스크리닝(I):" id="screen"><Spin id="screen" value="100" /></Prop>
              <div className="pt-[2px]">
                <Prop label="선종류(T):" id="ltype"><Select id="ltype" value="객체 선종류 사용" className="flex-1" /></Prop>
                <Prop label="가변성(V):" id="adapt" narrow><Select id="adapt" value="켜기" className="flex-1" /></Prop>
                <Prop label="선가중치(W):" id="lw">
                  <Select id="lw" value="0.1500 밀리미터" className="flex-1" tone="border border-[#3c7fb1] bg-linear-to-b from-[#e0f1fb] via-[#b9dff5] to-[#74b7e0]"><span className="w-[10px] h-px bg-[#333]" /></Select>
                </Prop>
                <Prop label="선 끝 스타일(E):" id="cap"><Select id="cap" value="객체 끝 스타일 사용" className="flex-1" /></Prop>
                <Prop label="선 결합 스타일(J):" id="join"><Select id="join" value="객체 결합 스타일 사용" className="flex-1" /></Prop>
                <Prop label="채움 스타일(F):" id="fill"><Select id="fill" value="객체 채움 스타일 사용" className="flex-1" /></Prop>
              </div>
            </fieldset>
            <div className="flex gap-[5px] mt-[5px] ml-[13px] mr-px">
              <button className={`w-[64px] h-[10px] leading-[8px] whitespace-nowrap shrink-0 ${raised}`}>선가중치 편집(L)...</button>
              <button aria-label="다른 이름으로 저장" className={`flex-1 h-[10px] ${raised}`} />
            </div>
          </div>
        </div>
        <div className="flex justify-end gap-[5px] mt-[4px]">
          <button className="w-[64px] h-[11px] leading-[9px] border border-[#3c9fc8] rounded-[1px] bg-linear-to-b from-[#eaf7fd] to-[#b6e2f4] ring-1 ring-inset ring-[#5fd0f0]">저장 및 닫기</button>
          <button aria-label="취소" className={`w-[47px] h-[10px] ${raised}`} />
          <button className={`w-[47px] h-[10px] leading-[8px] text-[7px] ${raised}`}>도움말(H)</button>
        </div>
      </div>
    </section>
  );
}

function WeightMenu() {
  return (
    <ul role="listbox" aria-label="선가중치" className="absolute left-[574px] top-[273px] w-[87px] h-[209px] flex flex-col bg-white border border-[#777] shadow-[1px_1px_1px_#888] text-[6px] text-[#222]">
      <li role="option" className="flex-1 flex items-center leading-[7px] px-px">객체 선가중치 사용</li>
      {weights.map((w) => (
        <li key={w} role="option" aria-selected={w === "0.1500"} className="flex-1 flex items-center gap-[2px] pl-px leading-[7px]">
          <span className={`w-[10px] shrink-0 ${strokeFor(w)}`} />
          <span className={`flex-1 whitespace-nowrap ${w === "0.1500" ? "bg-[#3399ff] text-white ring-1 ring-inset ring-[#a07a5580]" : ""}`}>{w} 밀리미터</span>
        </li>
      ))}
    </ul>
  );
}

export default function App() {
  return (
    <div lang="ko" className="relative flex flex-col h-screen min-h-[500px] overflow-hidden bg-black font-['Liberation_Sans','Noto_Sans_CJK_KR',sans-serif]">
      <header className="flex shrink-0">
        <button aria-label="응용프로그램 메뉴" className="flex items-center w-[20px] h-[22px] bg-linear-to-b from-[#a5a5a5] to-[#5f5f5f] border-r border-[#333] pb-[2px]">
          <Logo className="w-[14px] h-[16px]" /><Arrow className="text-[#333]" />
        </button>
        <div className="flex-1 min-w-0"><TitleRow /><MenuRow /></div>
      </header>
      <Ribbon />
      <DrawingArea />
      <LayoutTabs />
      <AnnotationBar />
      <CommandLine />
      <StatusBar />
      <Taskbar />
      <PlotDialog />
      <StyleEditor />
      <WeightMenu />
    </div>
  );
}
